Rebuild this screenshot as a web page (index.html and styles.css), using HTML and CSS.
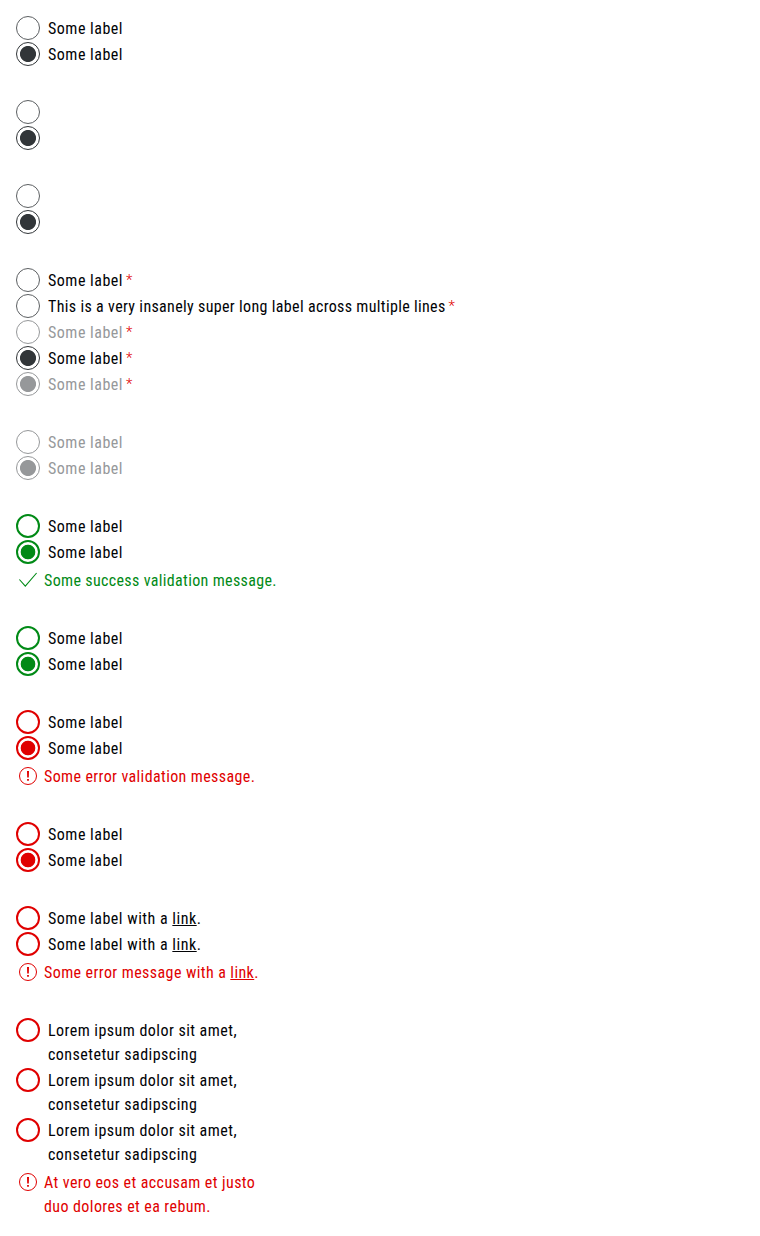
FILE: index.html
```html
<!DOCTYPE html>
<html lang="en">
<head>
<meta charset="utf-8">
<title>Radio buttons</title>
<link rel="stylesheet" href="styles.css">
</head>
<body>
<svg class="sprite" aria-hidden="true">
  <symbol id="check" viewBox="0 0 24 24"><path d="M3.4 11.5 9.3 18.1 20.6 5" fill="none" stroke="currentColor" stroke-width="1.1"/></symbol>
  <symbol id="alert" viewBox="0 0 24 24"><circle cx="12" cy="12" r="8.5" fill="none" stroke="currentColor"/><path d="M11 7h2l-.2 6.5h-1.6zM11.1 15h1.8v1.8h-1.8z" fill="currentColor"/></symbol>
</svg>
<main class="page">
  <section class="group">
    <label class="row"><input class="radio" type="radio"><span class="text">Some label</span></label>
    <label class="row"><input class="radio" type="radio" checked><span class="text">Some label</span></label>
  </section>
  <section class="group">
    <label class="row"><input class="radio" type="radio"></label>
    <label class="row"><input class="radio" type="radio" checked></label>
  </section>
  <section class="group">
    <label class="row"><input class="radio" type="radio"></label>
    <label class="row"><input class="radio" type="radio" checked></label>
  </section>
  <section class="group">
    <label class="row"><input class="radio" type="radio"><span class="text">Some label</span><span class="required">*</span></label>
    <label class="row"><input class="radio" type="radio"><span class="text long">This is a very insanely super long label across multiple lines</span><span class="required">*</span></label>
    <label class="row"><input class="radio" type="radio" disabled><span class="text">Some label</span><span class="required">*</span></label>
    <label class="row"><input class="radio" type="radio" checked><span class="text">Some label</span><span class="required">*</span></label>
    <label class="row"><input class="radio" type="radio" checked disabled><span class="text">Some label</span><span class="required">*</span></label>
  </section>
  <section class="group">
    <label class="row"><input class="radio" type="radio" disabled><span class="text">Some label</span></label>
    <label class="row"><input class="radio" type="radio" checked disabled><span class="text">Some label</span></label>
  </section>
  <section class="group success">
    <label class="row"><input class="radio" type="radio"><span class="text">Some label</span></label>
    <label class="row"><input class="radio" type="radio" checked><span class="text">Some label</span></label>
    <p class="message"><svg class="icon"><use href="#check"/></svg><span class="message-text success-text">Some success validation message.</span></p>
  </section>
  <section class="group success">
    <label class="row"><input class="radio" type="radio"><span class="text">Some label</span></label>
    <label class="row"><input class="radio" type="radio" checked><span class="text">Some label</span></label>
  </section>
  <section class="group error">
    <label class="row"><input class="radio" type="radio"><span class="text">Some label</span></label>
    <label class="row"><input class="radio" type="radio" checked><span class="text">Some label</span></label>
    <p class="message"><svg class="icon"><use href="#alert"/></svg><span class="message-text error-text">Some error validation message.</span></p>
  </section>
  <section class="group error">
    <label class="row"><input class="radio" type="radio"><span class="text">Some label</span></label>
    <label class="row"><input class="radio" type="radio" checked><span class="text">Some label</span></label>
  </section>
  <section class="group error">
    <label class="row"><input class="radio" type="radio"><span class="text">Some label with a <a href="#">link</a>.</span></label>
    <label class="row"><input class="radio" type="radio"><span class="text">Some label with a <a href="#">link</a>.</span></label>
    <p class="message"><svg class="icon"><use href="#alert"/></svg><span class="message-text">Some error message with a <a href="#">link</a>.</span></p>
  </section>
  <section class="group error narrow">
    <label class="row"><input class="radio" type="radio"><span class="text wrapped">Lorem ipsum dolor sit amet, consetetur sadipscing</span></label>
    <label class="row"><input class="radio" type="radio"><span class="text wrapped">Lorem ipsum dolor sit amet, consetetur sadipscing</span></label>
    <label class="row"><input class="radio" type="radio"><span class="text wrapped">Lorem ipsum dolor sit amet, consetetur sadipscing</span></label>
    <p class="message"><svg class="icon"><use href="#alert"/></svg><span class="message-text">At vero eos et accusam et justo duo dolores et ea rebum.</span></p>
  </section>
</main>
</body>
</html>
```
FILE: styles.css
```css
body { margin: 0; background: #fff; color: #010205; font: 16px/24px Roboto, sans-serif; font-stretch: 75%; letter-spacing: .41px; }
.sprite { display: none; }
.page { display: flex; flex-direction: column; gap: 34px; padding: 16px; }
.group { display: flex; flex-direction: column; gap: 2px; --state: #323639; --ring-color: #5c5f62; --ring: 1px; --dot: 8px; }
.success { --state: #018a16; --ring-color: #018a16; --ring: 2px; --dot: 7.3px; }
.error { --state: #e00000; --ring-color: #e00000; --ring: 2px; --dot: 7.3px; }
.narrow { width: 250px; }
.row { display: flex; align-items: flex-start; }
.radio { appearance: none; flex: none; box-sizing: border-box; width: 24px; height: 24px; margin: 0; border: var(--ring) solid var(--ring-color); border-radius: 50%; }
.radio:checked { border-color: var(--state); background: radial-gradient(circle, var(--state) calc(var(--dot) - .4px), transparent calc(var(--dot) + .4px)) border-box; }
.radio:disabled { --state: #96989a; --ring-color: #96989a; }
.radio:disabled + .text { color: #96989a; }
/* Top padding seats the text baseline against the 24px control. */
.text, .message-text { padding-top: 1px; margin-bottom: -1px; }
.text { margin-left: 8px; letter-spacing: .51px; }
.text.long { letter-spacing: .34px; }
.text.wrapped { letter-spacing: .46px; }
.required { margin-left: 3px; color: #e00000; font-size: 15px; font-weight: 300; }
a { color: inherit; text-decoration: underline; }
.message { display: flex; gap: 4px; margin: 2px 0 0; color: var(--state); }
.success-text { letter-spacing: .35px; }
.error-text { letter-spacing: .38px; }
.icon { flex: none; width: 24px; height: 24px; }
```
